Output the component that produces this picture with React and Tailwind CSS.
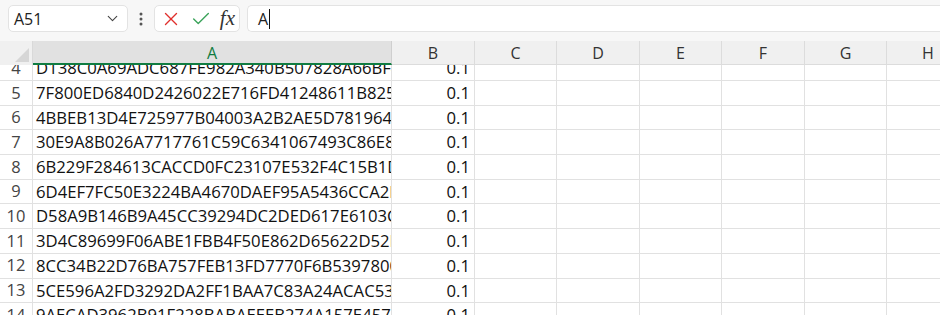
import { ChevronDown, X, Check } from 'lucide-react';

const COLS = [
  { key: 'B', w: 'w-[83px]' },
  { key: 'C', w: 'w-[82px]' },
  { key: 'D', w: 'w-[83px]' },
  { key: 'E', w: 'w-[82px]' },
  { key: 'F', w: 'w-[83px]' },
  { key: 'G', w: 'w-[82px]' },
  { key: 'H', w: 'w-[83px]' },
];

const ROWS = [
  [4, 'D138C0A69ADC687FE982A340B507828A66BF4C'],
  [5, '7F800ED6840D2426022E716FD41248611B825A'],
  [6, '4BBEB13D4E725977B04003A2B2AE5D7819640E'],
  [7, '30E9A8B026A7717761C59C6341067493C86E8F'],
  [8, '6B229F284613CACCD0FC23107E532F4C15B1D7'],
  [9, '6D4EF7FC50E3224BA4670DAEF95A5436CCA2B1'],
  [10, 'D58A9B146B9A45CC39294DC2DED617E6103C0A'],
  [11, '3D4C89699F06ABE1FBB4F50E862D65622D52E9'],
  [12, '8CC34B22D76BA757FEB13FD7770F6B5397800C'],
  [13, '5CE596A2FD3292DA2FF1BAA7C83A24ACAC53F1'],
  [14, '9AECAD3962B91F228BABAEEEB274A157E457D2'],
];

function FormulaBar() {
  return (
    <div className="flex h-[41px] items-start bg-[#f7f7f7] pt-[5px]">
      <div className="ml-[8px] flex h-[27px] w-[120px] items-center justify-between rounded-[5px] border border-[#e3e3e3] bg-white pl-[5px] pr-[6px]">
        <span className="text-[16px] text-[#222]">A51</span>
        <ChevronDown size={17} strokeWidth={1.6} className="text-[#444]" />
      </div>
      <div className="flex h-[27px] w-[26px] items-center justify-center">
        <svg width="4" height="14" viewBox="0 0 4 14">
          <circle cx="2" cy="2" r="1.5" fill="#555" />
          <circle cx="2" cy="7" r="1.5" fill="#555" />
          <circle cx="2" cy="12" r="1.5" fill="#555" />
        </svg>
      </div>
      <div className="flex h-[27px] w-[86px] items-center justify-between rounded-[5px] border border-[#e3e3e3] bg-white pl-[5px] pr-[4px]">
        <X size={22} strokeWidth={1.5} className="text-[#e0302c]" />
        <Check size={22} strokeWidth={1.5} className="text-[#3aa35a]" />
        <span className="font-['Liberation_Serif',serif] text-[21px] italic leading-none text-[#333]">
          fx
        </span>
      </div>
      <div className="ml-[7px] flex h-[27px] flex-1 items-center rounded-l-[5px] border border-r-0 border-[#e3e3e3] bg-white pl-[10px]">
        <span className="text-[16px] text-[#222]">A</span>
        <span className="ml-[1px] h-[20px] w-px bg-[#111]" />
      </div>
    </div>
  );
}

function HeaderRow() {
  return (
    <div className="flex h-[24px] bg-[#f0f0f0]">
      <div className="relative w-[33px] shrink-0 border-r border-[#d9d9d9]">
        <svg className="absolute bottom-[3px] right-[3px]" width="14" height="14" viewBox="0 0 14 14">
          <polygon points="14,0 14,14 0,14" fill="#d6d6d6" />
        </svg>
      </div>
      <div className="flex w-[359px] shrink-0 items-center justify-center border-b-2 border-r border-b-[#107c41] border-r-[#cfcfcf] bg-[#e1e1e1] pt-[1px] text-[16px] text-[#107c41]">
        A
      </div>
      {COLS.map((c) => (
        <div
          key={c.key}
          className={`${c.w} flex shrink-0 items-center justify-center border-b border-r border-[#dcdcdc] text-[16px] text-[#333]`}
        >
          {c.key}
        </div>
      ))}
    </div>
  );
}

function DataRow({ n, text, first }) {
  return (
    <div className={`flex ${first ? 'h-[16px] items-end' : 'h-[24.7px]'} border-b border-[#e1e1e1]`}>
      <div className="flex h-[24px] w-[33px] shrink-0 items-center justify-center border-r border-[#e1e1e1] text-[16.5px] text-[#444]">
        {n}
      </div>
      <div className="h-[24px] w-[359px] shrink-0 overflow-hidden whitespace-nowrap border-r border-[#e1e1e1] pl-[3px] text-[16.7px] leading-[24px] text-[#111]">
        {text}
      </div>
      <div className="h-[24px] w-[83px] shrink-0 border-r border-[#e1e1e1] pr-[4px] text-right text-[16.7px] leading-[24px] text-[#111]">
        0.1
      </div>
      {COLS.slice(1).map((c) => (
        <div key={c.key} className={`${c.w} h-[24px] shrink-0 border-r border-[#e1e1e1]`} />
      ))}
    </div>
  );
}

export default function App() {
  return (
    <div className="h-[315px] w-[940px] overflow-hidden bg-white font-['Open_Sans',sans-serif]">
      <FormulaBar />
      <HeaderRow />
      <div className="overflow-hidden">
        {ROWS.map(([n, text], i) => (
          <DataRow key={n} n={n} text={text} first={i === 0} />
        ))}
      </div>
    </div>
  );
}
